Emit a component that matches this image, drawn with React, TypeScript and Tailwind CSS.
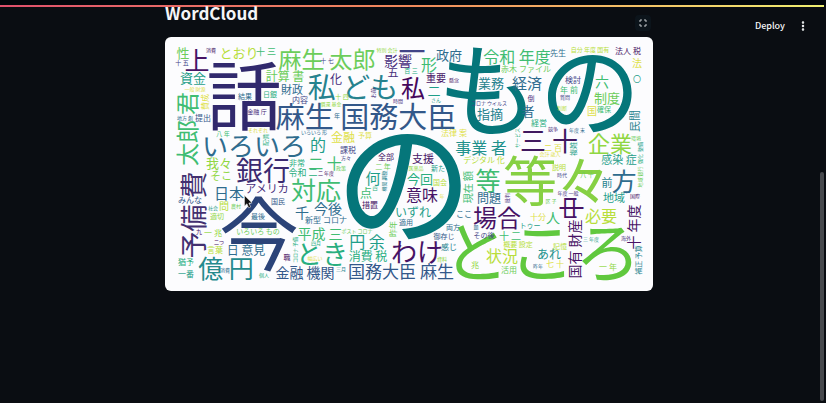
import { EllipsisVertical } from "lucide-react";

type Word = [text: string, cx: number, cy: number, size: number, color: string, upright?: boolean];

const PURPLE = "#471365";
const VIOLET = "#472d7b";
const INDIGO = "#414487";
const NAVY = "#33588a";
const BLUE = "#2f6c8e";
const CYAN = "#26828e";
const TEAL = "#1f9e89";
const SEA = "#28ae80";
const GREEN = "#40bd72";
const LEAF = "#6ccd5a";
const LIME = "#90d743";
const OLIVE = "#b8de3c";
const YELLOW = "#dfe04a";

// Centre x, centre y, font size and colour; the last flag turns the word bottom-to-top.
const WORDS: Word[] = [
  ["の", 404, 181, 139, "#05767a"],
  ["もの", 539, 90, 102, "#05767a"],
  ["今", 259, 234, 80, "#2b4378"],
  ["話", 244, 95, 75, "#31296d"],
  ["ところ", 542, 252, 66, "#60c83e"],
  ["等々", 557, 181, 54, "#86d043"],
  ["麻生 国務大臣", 366, 117, 29, NAVY],
  ["私 ども", 353, 87, 28, CYAN],
  ["一", 412, 52, 27, INDIGO],
  ["銀行", 263, 171, 27, "#3b2a70"],
  ["予備 費", 194, 215, 27, "#433070", true],
  ["いろいろ", 254, 146, 26, BLUE],
  ["三 十", 549, 141, 26, "#40185f"],
  ["上", 197, 60, 25, PURPLE],
  ["対応", 316, 190, 25, GREEN],
  ["等", 488, 180, 25, GREEN],
  ["方", 624, 181, 25, BLUE],
  ["とき", 322, 254, 26, SEA],
  ["わけ", 417, 252, 26, PURPLE],
  ["億 円", 226, 268, 25, "#248a8d"],
  ["中", 571, 208, 25, PURPLE, true],
  ["場合", 497, 218, 24, PURPLE],
  ["私", 413, 88, 24, "#46085c"],
  ["麻生 太郎", 327, 59, 23, LEAF],
  ["太郎 君", 187, 129, 23, GREEN, true],
  ["企業", 610, 144, 22, LIME],
  ["国務大臣 麻生", 401, 272, 17, NAVY],
  ["令和 年度", 517, 57, 16, GREEN],
  ["形", 429, 65, 16, GREEN],
  ["的", 318, 145, 16, TEAL],
  ["事業 者", 481, 148, 16, "#21918c"],
  ["意味", 422, 195, 16, PURPLE],
  ["円 余", 367, 242, 16, TEAL],
  ["状況", 502, 256, 16, OLIVE],
  ["必要", 601, 216, 16, OLIVE],
  ["経済", 527, 83, 15, BLUE],
  ["日本", 229, 193, 15, BLUE],
  ["何", 373, 178, 15, TEAL],
  ["二 十", 325, 163, 15, GREEN],
  ["影響", 398, 61, 14, VIOLET],
  ["六", 602, 82, 14, GREEN],
  ["千", 302, 213, 14, BLUE],
  ["今後", 328, 209, 14, BLUE],
  ["平成 三", 320, 234, 14, GREEN],
  ["金融 機関", 305, 273, 14, NAVY],
  ["国有 財産", 575, 249, 14, PURPLE, true],
  ["十 年度", 634, 227, 14, PURPLE, true],
  ["人", 553, 218, 14, GREEN],
  ["性", 183, 53, 13, LEAF],
  ["とおり", 239, 53, 13, OLIVE],
  ["資金", 193, 78, 13, TEAL],
  ["政府", 449, 55, 13, BLUE],
  ["二", 434, 91, 13, TEAL],
  ["業務", 491, 83, 13, CYAN],
  ["指摘", 490, 114, 13, CYAN],
  ["者", 528, 111, 13, BLUE],
  ["制度", 607, 98, 13, LEAF],
  ["我々", 219, 163, 13, LIME],
  ["今回", 420, 179, 13, SEA],
  ["消費 税", 368, 256, 12, SEA],
  ["計算 書", 285, 76, 12, LEAF],
  ["化", 336, 79, 12, VIOLET],
  ["金融", 343, 137, 12, YELLOW],
  ["問題", 489, 198, 12, BLUE],
  ["点", 366, 193, 12, GREEN],
  ["日 意見", 246, 250, 12, BLUE],
  ["あれ", 549, 254, 12, "#21918c"],
  ["いずれ", 413, 212, 12, TEAL],
  ["財政", 292, 90, 11, BLUE],
  ["五", 393, 73, 11, VIOLET],
  ["民間", 635, 121, 11, CYAN, true],
  ["感染 症", 619, 160, 11, TEAL],
  ["前", 607, 183, 11, CYAN],
  ["地域", 614, 198, 11, TEAL],
  ["支援", 423, 159, 11, PURPLE],
  ["そこ", 221, 176, 11, LIME],
  ["アメリカ", 267, 189, 11, VIOLET],
  ["重要", 436, 78, 10, PURPLE],
  ["法", 637, 63, 10, YELLOW],
  ["国", 592, 111, 10, YELLOW],
  ["現在 額", 468, 187, 10, GREEN, true],
  ["問", 224, 206, 10, OLIVE],
  ["十 二", 510, 236, 10, GREEN],
  ["十 三", 266, 52, 9, GREEN],
  ["〇", 637, 79, 8, TEAL],
  ["令和 二", 303, 173, 9, SEA],
  ["賛成", 205, 102, 8, YELLOW, true],
  ["内容", 300, 100, 8, INDIGO],
  ["法律 案", 454, 133, 8, YELLOW],
  ["先生", 558, 53, 8, BLUE],
  ["法人 税", 628, 51, 8, PURPLE],
  ["赤木 ファイル", 526, 69, 8, LEAF],
  ["検討", 573, 80, 8, INDIGO],
  ["年 前", 569, 90, 8, GREEN],
  ["経営", 539, 123, 8, SEA],
  ["二 百", 553, 148, 8, YELLOW],
  ["デジタル 化", 484, 160, 8, OLIVE],
  ["課税", 348, 150, 8, INDIGO],
  ["非常", 297, 163, 8, SEA],
  ["全部", 386, 157, 8, PURPLE],
  ["措置", 370, 205, 8, PURPLE],
  ["昨年", 393, 229, 8, LEAF, true],
  ["新型 コロナ", 326, 220, 8, BLUE],
  ["感じ", 449, 247, 8, CYAN],
  ["ここ", 464, 214, 8, BLUE],
  ["兆", 475, 265, 8, LIME],
  ["活用", 509, 270, 8, LEAF],
  ["七 十", 555, 264, 8, YELLOW],
  ["十分", 538, 217, 8, YELLOW],
  ["一 年", 608, 267, 8, LIME],
  ["提出", 203, 118, 8, NAVY],
  ["みんな", 190, 200, 8, NAVY],
  ["一 兆", 213, 233, 8, LIME],
  ["言葉", 215, 250, 8, OLIVE],
  ["猶予", 186, 262, 8, SEA],
  ["一番", 186, 274, 8, TEAL],
  ["日銀", 270, 94, 7, SEA],
  ["結果", 245, 96, 7, BLUE],
  ["予算", 365, 135, 7, YELLOW],
  ["確保", 604, 109, 7, GREEN],
  ["倒", 531, 98, 7, VIOLET],
  ["複雑", 573, 149, 7, TEAL, true],
  ["説明", 559, 167, 7, OLIVE],
  ["二 年", 383, 166, 7, LEAF],
  ["新た", 438, 168, 7, TEAL],
  ["国会", 440, 182, 7, OLIVE],
  ["適用", 406, 222, 7, BLUE],
  ["御存じ", 444, 236, 7, NAVY],
  ["両方", 453, 227, 7, BLUE],
  ["その後", 484, 235, 7, INDIGO],
  ["概要 設定", 518, 244, 7, OLIVE],
  ["記憶", 560, 246, 7, OLIVE],
  ["トゥー", 530, 225, 7, TEAL],
  ["補正 予算", 638, 260, 7, CYAN, true],
  ["国民", 278, 201, 7, NAVY],
  ["適切", 217, 216, 7, LIME],
  ["最後", 258, 216, 7, BLUE],
  ["いろいろ もの", 258, 231, 7, LEAF],
  ["職", 287, 257, 7, PURPLE],
  ["十 五", 182, 63, 6, INDIGO],
  ["十 七", 327, 61, 6, INDIGO],
  ["年", 337, 116, 6, BLUE],
  ["十 四", 342, 97, 6, LIME],
  ["百 三", 411, 71, 6, SEA],
  ["自分 年度 国有", 590, 50, 6, OLIVE],
  ["八 十", 587, 175, 6, LEAF],
  ["八 年", 223, 134, 6, GREEN],
  ["金融 庁", 257, 112, 6, VIOLET],
  ["配備", 266, 140, 6, SEA, true],
  ["九", 199, 232, 6, PURPLE],
  ["消費", 211, 50, 5, PURPLE],
  ["一般 財源", 195, 89, 5, YELLOW],
  ["お前", 373, 93, 5, VIOLET, true],
  ["償還 基金", 331, 104, 5, LIME],
  ["いろいろ 形", 314, 132, 5, BLUE],
  ["特別 会計", 387, 50, 5, LIME],
  ["懸念", 454, 80, 5, PURPLE],
  ["さん", 436, 100, 5, TEAL],
  ["時間", 398, 101, 5, VIOLET],
  ["質問", 565, 97, 5, INDIGO],
  ["判断", 562, 108, 5, OLIVE],
  ["コロナ ウイルス", 489, 103, 5, INDIGO],
  ["サービス", 517, 138, 5, SEA, true],
  ["競争", 553, 129, 5, VIOLET],
  ["年度 末", 577, 130, 5, BLUE],
  ["環境", 636, 138, 5, LEAF],
  ["整備", 640, 147, 5, TEAL, true],
  ["会計 歳入", 550, 154, 5, YELLOW],
  ["強化", 640, 159, 5, SEA, true],
  ["地域 銀行", 640, 177, 5, LEAF, true],
  ["時代", 562, 175, 5, INDIGO],
  ["国際", 635, 196, 5, PURPLE],
  ["年度 一般", 568, 193, 5, VIOLET],
  ["区 子", 551, 201, 5, LEAF],
  ["批判", 507, 198, 5, VIOLET, true],
  ["方々", 346, 158, 5, INDIGO],
  ["政策", 341, 168, 5, LEAF],
  ["二 年度", 326, 173, 5, PURPLE],
  ["医薬品", 416, 168, 5, LIME],
  ["機関 調整", 384, 181, 5, CYAN, true],
  ["四", 375, 188, 5, SEA],
  ["年", 442, 196, 5, YELLOW],
  ["ポスト コロナ", 357, 231, 5, LEAF],
  ["四月", 316, 243, 5, SEA],
  ["コロナ 予備", 295, 250, 5, SEA, true],
  ["幅広い", 315, 258, 5, YELLOW],
  ["資料", 442, 259, 5, LIME],
  ["三月", 341, 269, 5, CYAN],
  ["題", 476, 227, 5, BLUE],
  ["昨年", 538, 266, 5, BLUE],
  ["海外", 626, 238, 5, VIOLET],
  ["三 年度", 591, 239, 5, TEAL],
  ["地方 創", 185, 118, 5, BLUE],
  ["それぞれ", 258, 130, 5, YELLOW],
  ["社会", 213, 208, 5, TEAL],
  ["農村", 236, 206, 5, LEAF],
  ["二つ", 219, 242, 5, PURPLE],
  ["消費", 225, 270, 5, BLUE],
  ["個人", 264, 275, 5, SEA],
];

function WordCloud() {
  return (
    <svg
      viewBox="165 37 488 254"
      role="img"
      aria-label="WordCloud"
      className="block w-full rounded-md bg-[#fcfcfe] font-['Noto_Sans_CJK_JP',sans-serif]"
    >
      {WORDS.map(([text, cx, cy, size, color, upright], i) => (
        <text
          key={i}
          x={cx}
          y={cy + size * 0.38}
          fontSize={size}
          fill={color}
          textAnchor="middle"
          transform={upright ? `rotate(-90 ${cx} ${cy})` : undefined}
        >
          {text}
        </text>
      ))}
      <path
        d="M244.500 195.500v10.500l2.400-2.200 1.800 4 2-.9-1.800-3.900h3.200z"
        fill="#111"
        stroke="#ddd"
        strokeWidth="0.600"
      />
    </svg>
  );
}

export default function App() {
  return (
    <div className="flex min-h-screen flex-col bg-[#0a0d12] font-['Noto_Sans_CJK_JP',sans-serif] text-[#f4f5f7]">
      <div className="h-[5px] bg-[#02060b]" />
      <div className="mr-0.5 h-0.5 bg-linear-to-r from-[#e0506c] via-[#f08a5c] to-[#eeee70]" />
      <div className="flex flex-1">
        <div className="grid flex-1 grid-cols-[1fr_minmax(0,488px)_1fr] items-start">
          <main className="col-start-2">
            <div className="flex h-[30px] items-start justify-between">
              <h2 className="text-[17px] leading-3 font-bold">WordCloud</h2>
              <button
                type="button"
                aria-label="View fullscreen"
                className="mt-2 mr-0.5 flex size-4 items-center justify-center rounded-sm bg-[#0c141b] text-[#c4c8cc]"
              >
                <svg viewBox="0 0 8 8" className="size-2" fill="none" stroke="currentColor">
                  <path d="M1 3V1h2M5 1h2v2M7 5v2H5M3 7H1V5" />
                </svg>
              </button>
            </div>
            <WordCloud />
          </main>
          <div className="flex items-center justify-end gap-3 pt-[11px] pr-[9px]">
            <button type="button" className="text-[9px] leading-4 font-medium">
              Deploy
            </button>
            <button type="button" aria-label="Main menu">
              <EllipsisVertical className="size-3" strokeWidth={3} />
            </button>
          </div>
        </div>
        <div className="flex w-2 flex-col justify-end pb-0.5 pl-0.5">
          <div className="h-[58%] w-1 rounded-full bg-[#47494d]" />
        </div>
      </div>
    </div>
  );
}
